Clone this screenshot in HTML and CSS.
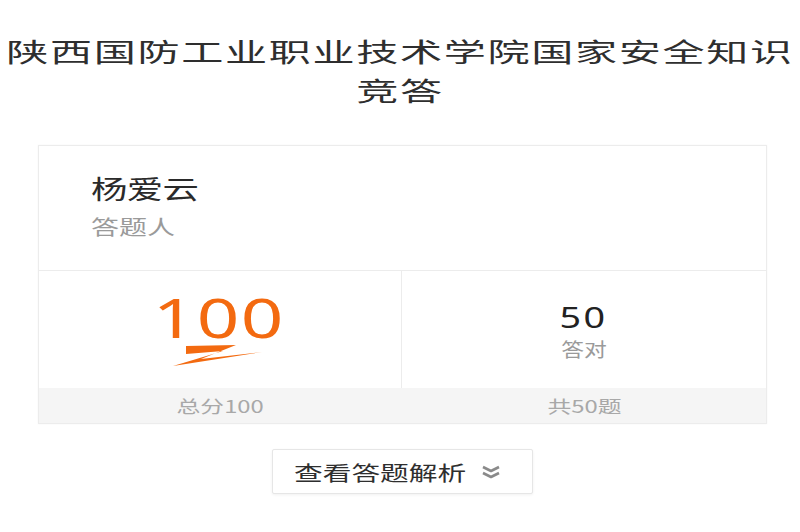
FILE: index.html
```html
<!DOCTYPE html>
<html lang="zh-CN">
<head>
<meta charset="utf-8">
<title>竞答结果</title>
<link rel="stylesheet" href="styles.css">
</head>
<body>
<div class="page">
  <div class="title">
    <div class="title-line"><span class="title-text">陕西国防工业职业技术学院国家安全知识</span></div>
    <div class="title-line"><span class="title-text">竞答</span></div>
  </div>

  <section class="card">
    <div class="person">
      <div class="person-name"><span class="stretch-left">杨爱云</span></div>
      <div class="person-label"><span class="stretch-left">答题人</span></div>
    </div>
    <div class="stats">
      <div class="stat stat-score">
        <div class="score">100</div>
        <svg class="swoosh" width="100" height="24" viewBox="0 0 100 24">
          <path d="M19 2 L69 1 L34 15 L95 8 L6 22 L56 7 L19 10 Z" fill="#f36a10"/>
        </svg>
      </div>
      <div class="stat stat-right">
        <div class="right-num">50</div>
        <div class="right-label">答对</div>
      </div>
      <div class="foot"><span class="foot-text">总分100</span></div>
      <div class="foot"><span class="foot-text">共50题</span></div>
    </div>
  </section>

  <div class="actions">
    <button class="btn-detail" type="button">
      <span class="btn-text">查看答题解析</span>
      <svg class="chev" width="20" height="14" viewBox="0 0 20 14">
        <polyline points="2,2 10,6 18,2" fill="none" stroke="#8a8a8a" stroke-width="2.6" stroke-linejoin="round"/>
        <polyline points="2,8 10,12 18,8" fill="none" stroke="#8a8a8a" stroke-width="2.6" stroke-linejoin="round"/>
      </svg>
    </button>
  </div>
</div>
</body>
</html>
```

FILE: styles.css
```css
html, body {
  margin: 0;
  padding: 0;
  background: #ffffff;
}

body {
  font-family: "Noto Sans CJK SC", "Noto Sans", sans-serif;
  color: #333333;
}

.page {
  width: 800px;
  height: 532px;
  overflow: hidden;
}

.title {
  padding-top: 31px;
  font-size: 26px;
  line-height: 39px;
  color: #2e2e2e;
}

.title-line {
  text-align: center;
  white-space: nowrap;
}

.title-text {
  display: inline-block;
  letter-spacing: 1px;
  margin-right: -1px;
  transform: scaleX(1.62);
}

.card {
  margin: 36px 0 0 38px;
  width: 727px;
  border: 1px solid #ececec;
  box-shadow: 0 0 2px rgba(0, 0, 0, 0.04);
}

.person {
  height: 125px;
  padding: 27px 0 0 52px;
  box-sizing: border-box;
  border-bottom: 1px solid #ececec;
}

.stretch-left {
  display: inline-block;
  transform: scaleX(1.4);
  transform-origin: left center;
}

.person-name {
  font-size: 26px;
  line-height: 30px;
  letter-spacing: -0.5px;
  color: #2a2a2a;
}

.person-label {
  margin-top: 12px;
  font-size: 20px;
  line-height: 24px;
  color: #9a9a9a;
}

.stats {
  display: grid;
  grid-template-columns: 363px 1fr;
  grid-template-rows: 117px 35px;
}

.stat {
  display: flex;
  flex-direction: column;
  align-items: center;
}

.stat-score {
  border-right: 1px solid #ececec;
}

.score {
  margin-top: 16px;
  margin-left: -2px;
  font-family: "Noto Sans", sans-serif;
  font-size: 54px;
  line-height: 60px;
  color: #f36a10;
  letter-spacing: 1px;
  transform: scaleX(1.38);
}

.swoosh {
  margin-top: -3px;
  margin-left: -6px;
}

.right-num {
  margin-top: 29px;
  font-family: "Noto Sans", sans-serif;
  font-size: 29px;
  line-height: 34px;
  color: #222222;
  letter-spacing: 2px;
  transform: scaleX(1.3);
}

.right-label {
  margin-top: 3px;
  margin-left: 0;
  font-size: 19px;
  line-height: 24px;
  color: #9a9a9a;
  transform: scaleX(1.2);
}

.foot {
  background: #f5f5f5;
  text-align: center;
  font-size: 17px;
  line-height: 35px;
  color: #a8a8a8;
}

.foot-text {
  display: inline-block;
  transform: scaleX(1.4);
}

.actions {
  margin-top: 25px;
  padding-left: 272px;
}

.btn-detail {
  width: 261px;
  height: 45px;
  padding: 0 0 0 21px;
  display: flex;
  align-items: center;
  background: #ffffff;
  border: 1px solid #e6e6e6;
  border-radius: 2px;
  box-shadow: 0 1px 3px rgba(0, 0, 0, 0.06);
  font-family: "Noto Sans CJK SC", "Noto Sans", sans-serif;
  cursor: pointer;
}

.btn-text {
  display: inline-block;
  font-size: 20.5px;
  line-height: 26px;
  color: #2e2e2e;
  transform: scaleX(1.4);
  transform-origin: left center;
}

.chev {
  margin-left: 64px;
}
```
